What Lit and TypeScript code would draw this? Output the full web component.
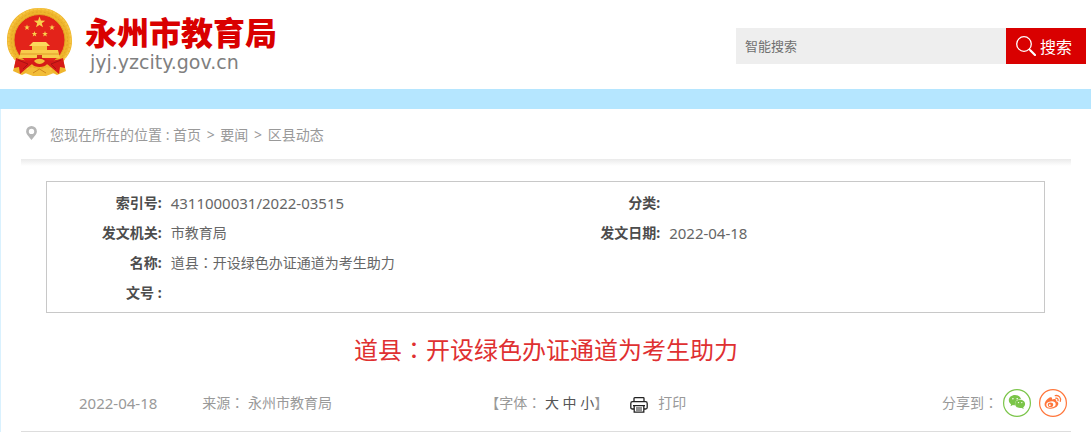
import { LitElement, html, css, svg } from "lit";
import { customElement } from "lit/decorators.js";

/* Small five-pointed star centred on a point. */
const star = (cx: number, cy: number, r: number) => {
  const pts: string[] = [];
  for (let i = 0; i < 10; i++) {
    const a = -Math.PI / 2 + (i * Math.PI) / 5;
    const d = i % 2 ? r * 0.4 : r;
    pts.push(`${(cx + d * Math.cos(a)).toFixed(2)},${(cy + d * Math.sin(a)).toFixed(2)}`);
  }
  return svg`<polygon points=${pts.join(" ")} fill="#f9d04c"/>`;
};

const colon = html`<span class="colon" lang="ja">：</span>`;

@customElement("site-header")
class SiteHeader extends LitElement {
  static styles = css`
    :host { display: block; background: #fff; }
    .bar { display: flex; justify-content: space-between; align-items: flex-start; height: 89px; padding: 0 5px 0 6px; }
    .brand { display: flex; gap: 12px; padding-top: 7px; color: inherit; text-decoration: none; }
    .emblem { display: block; width: 67px; height: 70px; }
    .names { display: flex; flex-direction: column; padding-top: 1px; }
    .name { font: 900 32px/46px "Noto Sans CJK SC", sans-serif; color: #d90000; }
    .domain { font: 19px/16px "DejaVu Sans", sans-serif; color: #808080; padding-left: 5px; }
    .search { display: flex; margin-top: 28px; width: 350px; height: 36px; }
    .box { flex: 1; min-width: 0; border: 0; border-radius: 0; padding: 0 9px; background: #eee; outline: 0;
      font: 13px "Noto Sans", "Noto Sans CJK SC", sans-serif; color: #555; }
    .box::placeholder { color: #707070; opacity: 1; }
    .go { display: flex; align-items: center; gap: 4px; width: 80px; border: 0; padding: 0 0 0 10px; background: #d90000; color: #fff;
      font: 16px/24px "Noto Sans CJK SC", sans-serif; white-space: nowrap; cursor: pointer; }
    .glass { display: block; width: 20px; height: 20px; flex: none; }
    .band { height: 20px; background: #b5e6ff; }
  `;
  render() {
    return html`
      <header class="bar">
        <a class="brand" href="#">
          <svg class="emblem" viewBox="0 0 67 70" aria-hidden="true">
            <path d="M10 53C4 49 1 42 1 34C1 14 15 1 33.500 1S66 14 66 34C66 42 63 49 57 53L60 64L51 68L45 65L40 68H27L22 65L16 68L7 64Z" fill="#efb52c"/>
            <circle cx="33.500" cy="33" r="31" fill="none" stroke="#f5c442" stroke-width="2" stroke-dasharray="3 1"/>
            <circle cx="33.500" cy="33" r="28" fill="none" stroke="#e2a527" stroke-width="1" stroke-dasharray="2 2"/>
            <circle cx="33.500" cy="33" r="25.500" fill="#e3231a" stroke="#e1a224" stroke-width="1"/>
            ${star(33.5, 15.5, 6)}${star(21, 20.500, 3)}${star(46, 20.500, 3)}${star(28.500, 27, 3)}${star(39, 27, 3)}
            <path d="M25 37L27 35H40L42 37L44 39H23Z" fill="#fbd95b"/>
            <path d="M26 39H41V43H26Z" fill="#f4c340"/>
            <path d="M15 43H52L54 51H13Z" fill="#f8cd4b"/>
            <path d="M14 47H53" stroke="#e09a2a" stroke-width="1"/>
            <path d="M31 48H36V51H31Z" fill="#d8321d"/>
            <path d="M10 51C16 53 22 55 28 52C30 50 37 50 39 52C45 55 51 53 57 51L59 61L54 60L53 67L46 61L41 57C39 61 28 61 26 57L21 61L14 67L13 60L8 61Z" fill="#d61a18"/>
            <path d="M28 54C31 51 36 51 39 54C36 58 31 58 28 54Z" fill="#f2bd38"/>
            <path d="M19 66L26 60L33.500 63L41 60L48 66L40 69H27Z" fill="#f2bd38"/>
            <path d="M27 66L33.500 62L40 66" fill="none" stroke="#cf861c" stroke-width="1"/>
            <path d="M12 53L22 57L17 62M55 53L45 57L50 62" fill="none" stroke="#a91212" stroke-width="1"/>
          </svg>
          <span class="names">
            <span class="name">永州市教育局</span>
            <span class="domain">jyj.yzcity.gov.cn</span>
          </span>
        </a>
        <form class="search" role="search" @submit=${(e: Event) => e.preventDefault()}>
          <input class="box" type="text" aria-label="智能搜索" placeholder="智能搜索">
          <button class="go" type="submit">
            <svg class="glass" viewBox="0 0 20 20" fill="none" stroke="#fff" aria-hidden="true">
              <circle cx="8" cy="8" r="7.300" stroke-width="1.300"/>
              <path d="M13 13L15 15" stroke-width="1.300"/>
              <path d="M14.500 14.500L19 19" stroke-width="2.200" stroke-linecap="round"/>
            </svg>
            搜索
          </button>
        </form>
      </header>
      <div class="band"></div>
    `;
  }
}

@customElement("info-table")
class InfoTable extends LitElement {
  static styles = css`
    :host { display: block; border: 1px solid #c8c8c8; padding: 6px 0 4px; }
    .grid { width: 100%; table-layout: fixed; border-collapse: collapse; font-size: 14px; line-height: 30px; color: #666; }
    .grid th, .grid td { height: 30px; padding: 0; }
    .key { width: 11.5%; text-align: right; font-weight: 700; color: #4c4c4c; white-space: nowrap; }
    .grid .val { padding-left: 9px; text-align: left; }
    .grid .num { font-size: 15px; }
    .colon { font-family: "Noto Sans CJK JP", sans-serif; line-height: 1; }
  `;
  render() {
    return html`
      <table class="grid">
        <tbody>
          <tr>
            <th class="key" scope="row">索引号:</th><td class="val num">4311000031/2022-03515</td>
            <th class="key" scope="row">分类:</th><td class="val"></td>
          </tr>
          <tr>
            <th class="key" scope="row">发文机关:</th><td class="val">市教育局</td>
            <th class="key" scope="row">发文日期:</th><td class="val num">2022-04-18</td>
          </tr>
          <tr>
            <th class="key" scope="row">名称:</th><td class="val" colspan="3">道县${colon}开设绿色办证通道为考生助力</td>
          </tr>
          <tr>
            <th class="key" scope="row">文号 :</th><td class="val" colspan="3"></td>
          </tr>
        </tbody>
      </table>
    `;
  }
}

@customElement("article-meta")
class ArticleMeta extends LitElement {
  static styles = css`
    :host { display: grid; grid-template-columns: 44% 1fr auto; align-items: center; height: 56px; padding-right: 4px;
      border-bottom: 1px solid #ddd; font-size: 14px; line-height: 20px; color: #999; white-space: nowrap; }
    .left { display: flex; align-items: center; gap: 45px; padding-left: 58px; }
    .date { font-size: 15px; }
    .mid { display: flex; align-items: center; gap: 22px; padding-left: 4px; }
    .size, .print { border: 0; padding: 0; background: none; font: inherit; cursor: pointer; }
    .size { color: #555; }
    .print { display: flex; align-items: center; gap: 10px; color: #999; }
    .printer { display: block; width: 18px; height: 16px; margin-top: 4px; }
    .share { display: flex; align-items: center; gap: 8px; }
    .round { display: block; width: 28px; height: 28px; }
    .round svg { display: block; width: 28px; height: 28px; }
    .to { margin-right: -3px; }
    .colon { font-family: "Noto Sans CJK JP", sans-serif; line-height: 1; }
  `;
  render() {
    return html`
      <div class="left">
        <time class="date" datetime="2022-04-18">2022-04-18</time>
        <span>来源${colon} 永州市教育局</span>
      </div>
      <div class="mid">
        <span>【字体${colon} <button class="size" type="button">大</button> <button class="size" type="button">中</button> <button class="size" type="button">小</button>】</span>
        <button class="print" type="button">
          <svg class="printer" viewBox="0 0 18 16" fill="none" stroke="#222" stroke-width="1.300" aria-hidden="true">
            <path d="M4 4.500V1.500Q4 .7 4.800 .7H13.200Q14 .7 14 1.500V4.500"/>
            <path d="M4 12H2.500Q.8 12 .8 10.500V6.500Q.8 4.700 2.500 4.700H15.500Q17.200 4.700 17.200 6.500V10.500Q17.200 12 15.500 12H14"/>
            <path d="M3 8.700H15M4.200 8.700V15.200H13.800V8.700"/>
            <path d="M6 11H12M6 13H12" stroke-width="1"/>
          </svg>
          打印
        </button>
      </div>
      <div class="share">
        <span class="to">分享到${colon}</span>
        <a class="round" href="#" aria-label="微信">
          <svg viewBox="0 0 28 28" aria-hidden="true">
            <circle cx="14" cy="14" r="13.400" fill="#fff" stroke="#7bc549" stroke-width="1.200"/>
            <path d="M12 6C8.500 6 5.800 8.300 5.800 11.200C5.800 12.900 6.700 14.300 8.100 15.200L7.500 17.300L9.900 16C10.600 16.200 11.200 16.300 12 16.300C11.300 12.700 14.300 10 18 9.900C17.300 7.600 14.900 6 12 6Z" fill="#7bc549"/>
            <path d="M17.100 10.700C14.300 10.700 12.100 12.500 12.100 14.900S14.300 19.100 17.100 19.100C17.700 19.100 18.200 19 18.700 18.900L20.700 20L20.200 18.200C21.400 17.400 22.100 16.200 22.100 14.900C22.100 12.500 19.900 10.700 17.100 10.700Z" fill="#7bc549"/>
            <g fill="#fff"><circle cx="9.900" cy="9.700" r=".8"/><circle cx="14.200" cy="9.700" r=".8"/><circle cx="15.500" cy="13.600" r=".7"/><circle cx="18.800" cy="13.600" r=".7"/></g>
          </svg>
        </a>
        <a class="round" href="#" aria-label="微博">
          <svg viewBox="0 0 28 28" aria-hidden="true">
            <circle cx="14" cy="14" r="13.400" fill="#fff" stroke="#ff763b" stroke-width="1.200"/>
            <path d="M11.500 8.300C12.900 8 13.400 9 13 10.400C14.500 9.700 17.700 9.300 17.200 12.200C18.700 12.700 19.600 13.600 19.300 15.100C18.900 17.800 15.500 19.700 11.900 19.700C8.300 19.700 5.600 18 5.600 15.400C5.600 12.700 9 8.800 11.500 8.300Z" fill="#ff763b"/>
            <ellipse cx="12" cy="15.500" rx="4.700" ry="3.100" transform="rotate(-8 12 15.500)" fill="#fff"/>
            <ellipse cx="11.500" cy="15.700" rx="2.700" ry="2.300" fill="#ff763b"/>
            <circle cx="10.800" cy="16.200" r=".9" fill="#fff"/>
            <path d="M16.300 6.700C19.900 5.800 22.500 9 21.300 12.400M16.800 9.200C18.500 8.900 19.500 10.300 19 11.700" fill="none" stroke="#ff763b" stroke-width="1.300" stroke-linecap="round"/>
          </svg>
        </a>
      </div>
    `;
  }
}

@customElement("app-root")
class AppRoot extends LitElement {
  static styles = css`
    :host { display: block; background: #fff; font-family: "Noto Sans", "Noto Sans CJK SC", sans-serif; }
    .page { border-left: 1px solid #d9f1fe; padding: 0 20px; }
    .crumbs { display: flex; align-items: center; gap: 13px; height: 48px; padding: 2px 0 0 5px; font-size: 14px; line-height: 20px; color: #999; }
    .crumbs a { color: inherit; text-decoration: none; }
    .sep { padding: 0 2px; }
    .pin { display: block; width: 11px; height: 14px; margin-bottom: 4px; }
    .shade { height: 7px; background: linear-gradient(#eaeaea, #fff); }
    .info { margin: 15px 26px 0 25px; }
    .title { margin: 19px 0 0; text-align: center; font-size: 24px; line-height: 36px; font-weight: 400; color: #df3031; }
    .meta { margin-top: 7px; }
    .colon { font-family: "Noto Sans CJK JP", sans-serif; line-height: 1; }
  `;
  render() {
    return html`
      <site-header></site-header>
      <main class="page">
        <nav class="crumbs">
          <svg class="pin" viewBox="0 0 11 14" aria-hidden="true">
            <path fill="#b5b5b5" fill-rule="evenodd" d="M5.500 0A5.400 5.400 0 0 1 10.900 5.400C10.900 8.400 7.500 11 5.500 14C3.500 11 .1 8.400 .1 5.400A5.400 5.400 0 0 1 5.500 0ZM5.500 2.700A2.700 2.700 0 1 0 5.500 8.100A2.700 2.700 0 1 0 5.500 2.700Z"/>
          </svg>
          <span>您现在所在的位置 : <a href="#">首页</a> <span class="sep">&gt;</span> <a href="#">要闻</a> <span class="sep">&gt;</span> <a href="#">区县动态</a></span>
        </nav>
        <div class="shade"></div>
        <info-table class="info"></info-table>
        <h1 class="title">道县${colon}开设绿色办证通道为考生助力</h1>
        <article-meta class="meta"></article-meta>
      </main>
    `;
  }
}
